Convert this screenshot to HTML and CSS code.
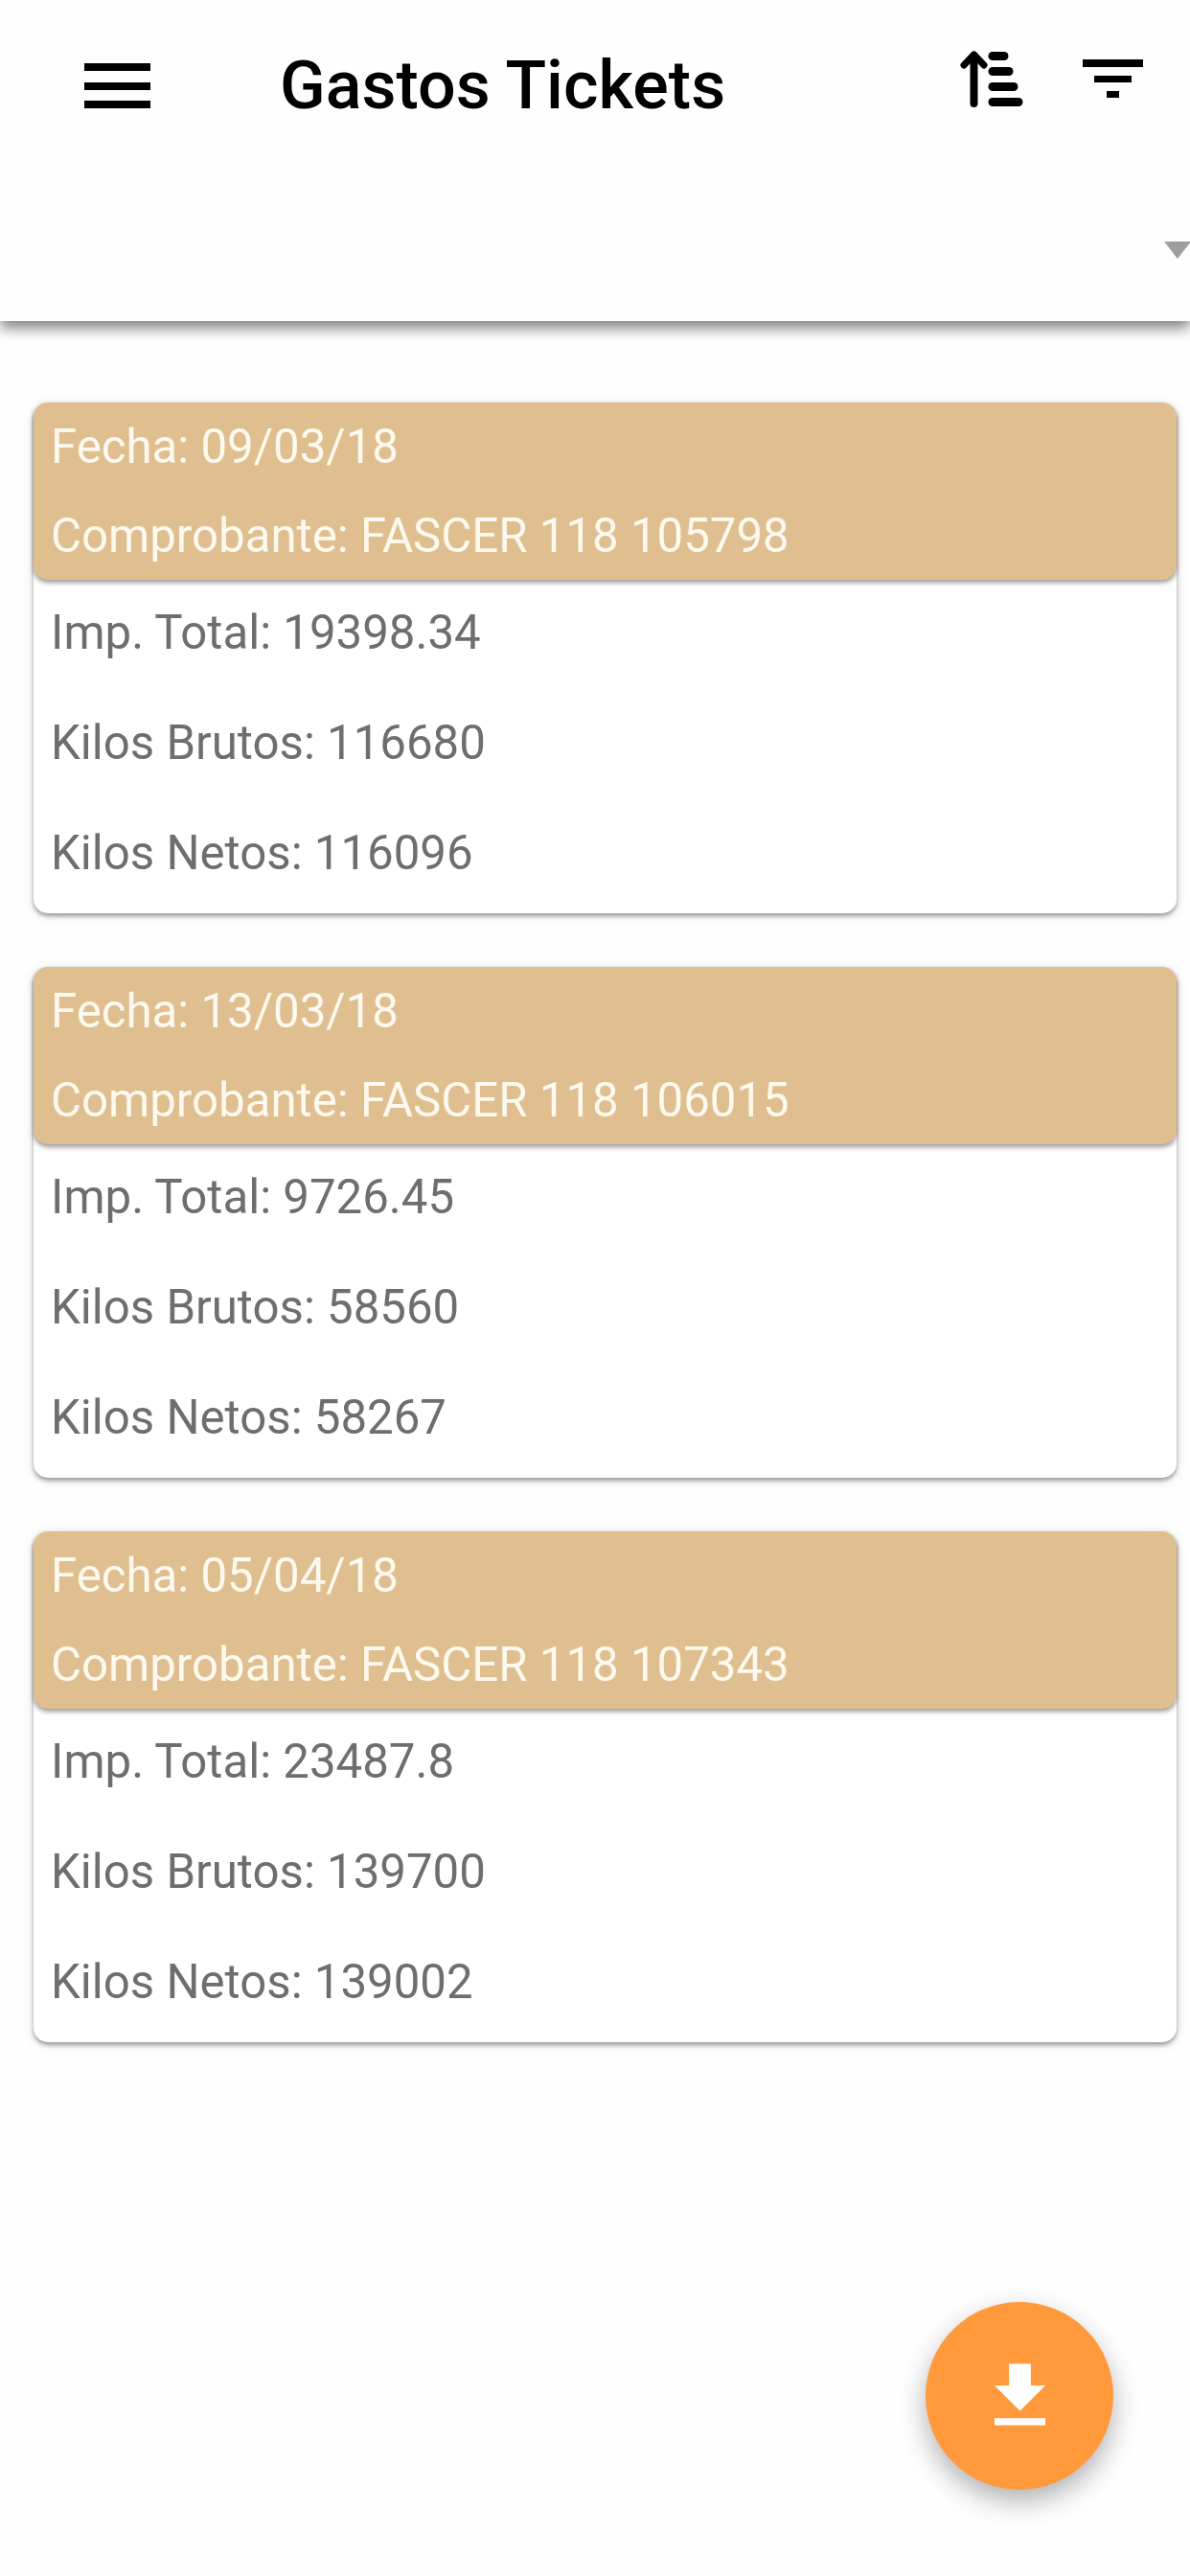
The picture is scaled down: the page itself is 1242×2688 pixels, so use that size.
FILE: index.html
```html
<!DOCTYPE html>
<html lang="en">

<head>
    <meta charset="UTF-8">
    <title>Gastos Tickets</title>
    <link rel="stylesheet" href="styles.css">
</head>

<body>
    <div class="page">
        <header class="top-bar">
            <div class="toolbar">
                <svg class="menu-icon" width="69" height="47" viewBox="0 0 69 47" fill="#000">
                    <rect x="0" y="0" width="69" height="8"></rect>
                    <rect x="0" y="20" width="69" height="8"></rect>
                    <rect x="0" y="39" width="69" height="8"></rect>
                </svg>
                <h1>Gastos Tickets</h1>
                <svg class="sort-icon" width="66" height="60" viewBox="0 0 66 60" fill="none" stroke="#000" stroke-linecap="round" stroke-linejoin="round">
                    <path d="M14.5 56V6" stroke-width="8"></path>
                    <path d="M4 16L14.500 5L25 16" stroke-width="7"></path>
                    <path d="M34 6.500H46" stroke-width="9"></path>
                    <path d="M34 22.500H51" stroke-width="9"></path>
                    <path d="M34 38.500H56" stroke-width="9"></path>
                    <path d="M34 54.500H61" stroke-width="9"></path>
                </svg>
                <svg class="filter-icon" width="63" height="40" viewBox="0 0 63 40" fill="#000">
                    <rect x="0" y="0" width="63" height="8"></rect>
                    <rect x="12" y="17" width="39" height="7"></rect>
                    <rect x="25" y="33" width="13" height="7"></rect>
                </svg>
            </div>
            <div class="select-row">
                <span class="select-arrow"></span>
            </div>
        </header>

        <main class="ticket-list">
            <section class="ticket">
                <div class="ticket-head">
                    <p>Fecha: 09/03/18</p>
                    <p>Comprobante: FASCER 118 105798</p>
                </div>
                <div class="ticket-body">
                    <p>Imp. Total: 19398.34</p>
                    <p>Kilos Brutos: 116680</p>
                    <p>Kilos Netos: 116096</p>
                </div>
            </section>

            <section class="ticket">
                <div class="ticket-head">
                    <p>Fecha: 13/03/18</p>
                    <p>Comprobante: FASCER 118 106015</p>
                </div>
                <div class="ticket-body">
                    <p>Imp. Total: 9726.45</p>
                    <p>Kilos Brutos: 58560</p>
                    <p>Kilos Netos: 58267</p>
                </div>
            </section>

            <section class="ticket">
                <div class="ticket-head">
                    <p>Fecha: 05/04/18</p>
                    <p>Comprobante: FASCER 118 107343</p>
                </div>
                <div class="ticket-body">
                    <p>Imp. Total: 23487.8</p>
                    <p>Kilos Brutos: 139700</p>
                    <p>Kilos Netos: 139002</p>
                </div>
            </section>
        </main>

        <button class="fab">
            <svg width="91" height="91" viewBox="0 0 24 24" fill="#fff">
                <path d="M19 9h-4V3H9v6H5l7 7 7-7zM5 18v2h14v-2H5z"></path>
            </svg>
        </button>
    </div>
</body>

</html>
```

FILE: styles.css
```css
* {
    margin: 0;
    padding: 0;
    box-sizing: border-box;
}

body {
    background-color: #fefefe;
    font-family: Roboto, "Liberation Sans", sans-serif;
}

.page {
    position: relative;
    width: 1242px;
    height: 2688px;
    overflow: hidden;
}

.top-bar {
    height: 335px;
    background-color: #fefefe;
    box-shadow: 0 7px 14px rgba(0, 0, 0, 0.5);
}

.toolbar {
    display: flex;
    align-items: flex-start;
    height: 200px;
}

.menu-icon {
    margin: 66px 0 0 88px;
}

.toolbar h1 {
    margin: 44px 0 0 135px;
    font-size: 70px;
    line-height: 90px;
    font-weight: 500;
    color: #000;
}

.sort-icon {
    margin: 52px 0 0 auto;
}

.filter-icon {
    margin: 62px 49px 0 62px;
}

.select-row {
    display: flex;
    justify-content: flex-end;
    padding-top: 52px;
}

.select-arrow {
    width: 0;
    height: 0;
    margin-right: -1px;
    border-left: 14px solid transparent;
    border-right: 14px solid transparent;
    border-top: 18px solid #9e9e9e;
}

.ticket-list {
    display: flex;
    flex-direction: column;
    gap: 56px;
    padding: 85px 14px 0 35px;
}

.ticket {
    height: 533px;
    background-color: #fff;
    border-radius: 15px;
    box-shadow: 0 3px 4px rgba(0, 0, 0, 0.35), 0 2px 14px rgba(0, 0, 0, 0.1);
}

.ticket-head {
    height: 185px;
    background-color: #dfbf8f;
    border-radius: 15px;
    box-shadow: 0 3px 5px rgba(0, 0, 0, 0.4);
    color: #fdf9ef;
}

.ticket-head p {
    height: 93px;
    padding-left: 18px;
    font-size: 49.2px;
    line-height: 93px;
}

.ticket-body {
    padding-top: 2px;
    color: #6e6e6e;
}

.ticket-body p {
    height: 115px;
    padding-left: 18px;
    font-size: 49.2px;
    line-height: 106px;
}

.fab {
    position: absolute;
    left: 966px;
    top: 2402px;
    display: flex;
    align-items: center;
    justify-content: center;
    width: 196px;
    height: 196px;
    background-color: #ff993c;
    border: none;
    border-radius: 50%;
    box-shadow: 0 12px 28px rgba(0, 0, 0, 0.3);
}
```
